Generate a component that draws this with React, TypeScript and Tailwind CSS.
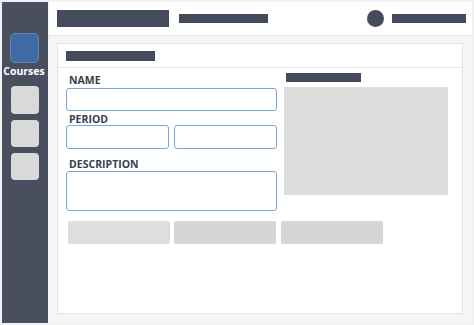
import React from 'react';

const font = { fontFamily: '"Open Sans", "Liberation Sans", sans-serif' };

const Sidebar: React.FC = () => (
    <div className="w-[46px] shrink-0 bg-[#4a4f60] flex flex-col items-start pl-[8px] pt-[31px]">
        <div className="w-[29px] h-[30px] rounded-[5px] bg-[#3f6aa6] border-[1.5px] border-[#5d86bf]" />
        <div className="w-[46px] -ml-[8px] pr-[2px] mt-[1px] text-center text-[10.5px] font-bold text-white leading-[14px]">Courses</div>
        <div className="flex flex-col gap-[6px] mt-[8px] ml-[1px]">
            <div className="w-[28px] h-[28px] rounded-[4px] bg-[#d9d9d9]" />
            <div className="w-[28px] h-[27px] rounded-[4px] bg-[#d9d9d9]" />
            <div className="w-[28px] h-[27px] rounded-[4px] bg-[#d9d9d9]" />
        </div>
    </div>
);

const Header: React.FC = () => (
    <div className="h-[34px] shrink-0 bg-white border-b border-[#e6e7ea] flex items-center pl-[8px] pr-[6px]">
        <div className="w-[112px] h-[17px] bg-[#454a5c]" />
        <div className="w-[89px] h-[9px] bg-[#454a5c] ml-[10px]" />
        <div className="flex-1" />
        <div className="w-[17px] h-[17px] rounded-full bg-[#454a5c]" />
        <div className="w-[74px] h-[9px] bg-[#454a5c] ml-[8px]" />
    </div>
);

const Label: React.FC<{ text: string; className: string }> = ({ text, className }) => (
    <div className={`flex pl-[3px] text-[10.5px] font-bold text-[#393e4d] leading-none ${className}`}>{text}</div>
);

const Field: React.FC<{ className: string }> = ({ className }) => (
    <div className={`bg-white border border-[#7aa6dc] rounded-[3px] ${className}`} />
);

const App: React.FC = () => {
    return (
        <div className="w-[474px] h-[325px] bg-[#f0f1f3] p-[2px] overflow-hidden" style={font}>
            <div className="flex h-full">
                <Sidebar />
                <div className="flex-1 flex flex-col ml-[1px] bg-[#f4f5f7]">
                    <Header />
                    <div className="flex-1 pt-[7px] pl-[8px] pr-[9px] pb-[9px]">
                        <div className="h-full bg-white border border-[#e3e5e8] flex flex-col">
                            <div className="h-[24px] shrink-0 border-b border-[#e3e5e8] flex items-center pl-[8px]">
                                <div className="w-[89px] h-[10px] bg-[#454a5c]" />
                            </div>
                            <div className="flex pl-[8px]">
                                <div className="w-[211px] flex flex-col">
                                    <Label text="NAME" className="h-[20px] items-end pb-[3px]" />
                                    <Field className="h-[23px]" />
                                    <Label text="PERIOD" className="h-[14px] items-center pt-[2px]" />
                                    <div className="flex gap-[5px]">
                                        <Field className="w-[103px] h-[24px]" />
                                        <Field className="w-[103px] h-[24px]" />
                                    </div>
                                    <Label text="DESCRIPTION" className="h-[22px] items-end pb-[2px]" />
                                    <Field className="h-[40px]" />
                                </div>
                                <div className="ml-[7px] pt-[5px]">
                                    <div className="w-[75px] h-[9px] bg-[#454a5c] ml-[2px]" />
                                    <div className="w-[164px] h-[108px] bg-[#dddddd] mt-[5px]" />
                                </div>
                            </div>
                            <div className="flex pl-[10px] mt-[10px]">
                                <div className="w-[102px] h-[23px] rounded-[2px] bg-[#dedede]" />
                                <div className="w-[102px] h-[23px] rounded-[2px] bg-[#d6d6d6] ml-[4px]" />
                                <div className="w-[102px] h-[23px] rounded-[2px] bg-[#d6d6d6] ml-[5px]" />
                            </div>
                        </div>
                    </div>
                </div>
            </div>
        </div>
    );
};

export default App;
